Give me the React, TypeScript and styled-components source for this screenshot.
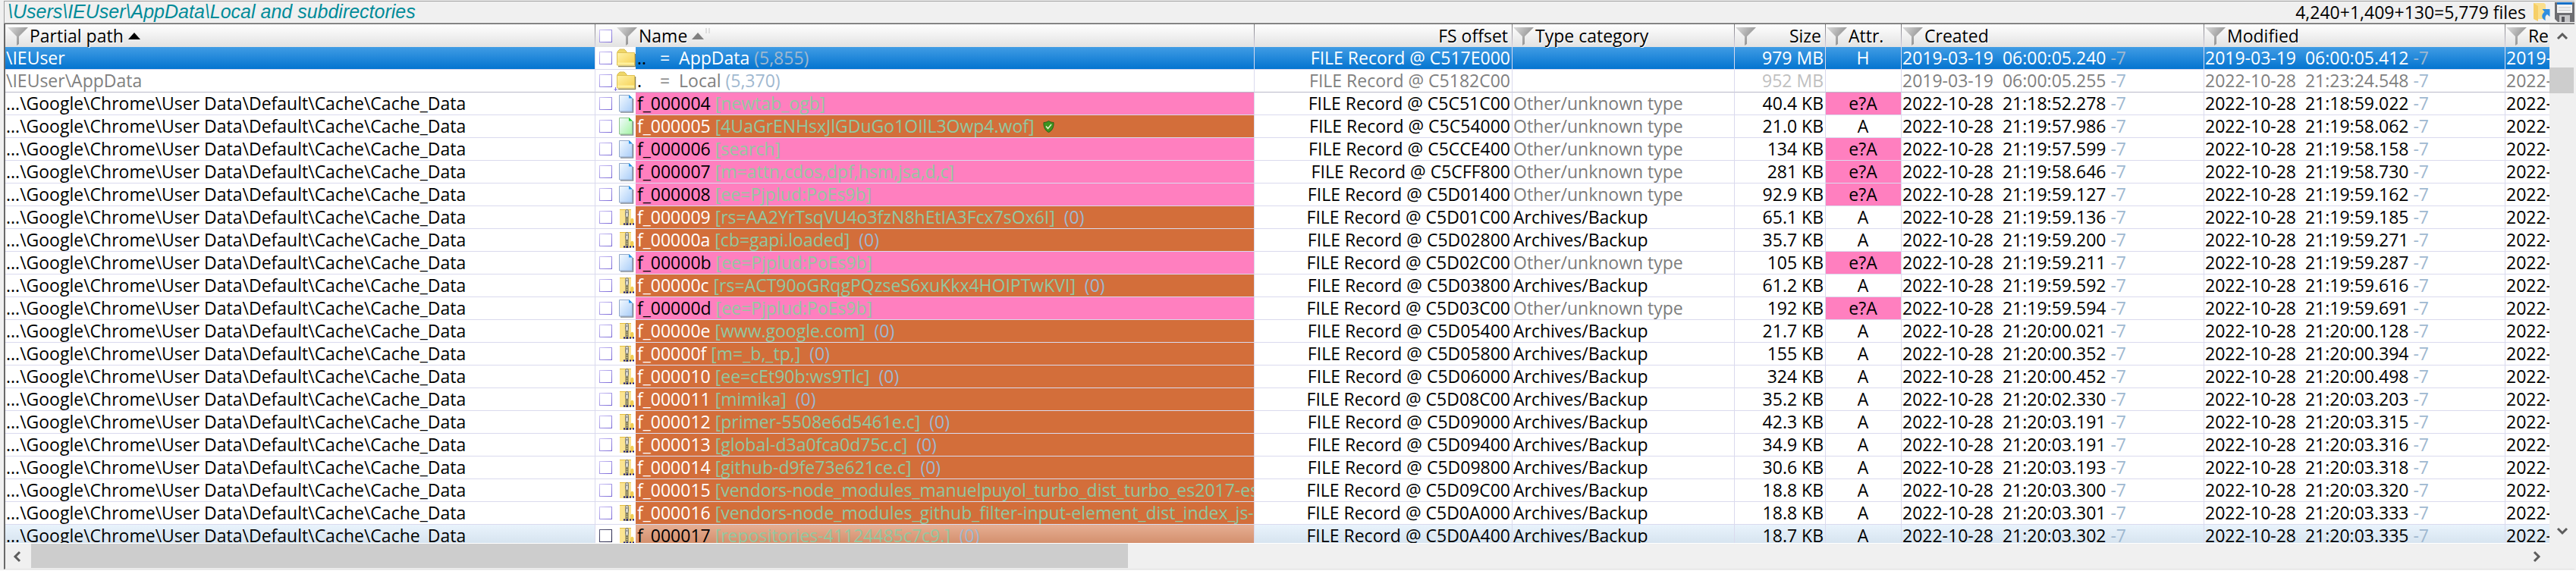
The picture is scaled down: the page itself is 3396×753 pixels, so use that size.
import React from "react";
import styled, { createGlobalStyle, css } from "styled-components";

type Kind = "file" | "compressed" | "archive" | "folder" | "folderHere";
type Tone = "selected" | "muted" | "hover" | "normal";

interface FileRow {
  path: string;
  kind: Kind;
  name: string;
  title?: string;
  target?: string;
  count?: string;
  verified?: boolean;
  offset: string;
  type: string;
  size: string;
  attr: string;
  created: string;
  modified: string;
  record: string;
  tone: Tone;
}

const CACHE = "...\\Google\\Chrome\\User Data\\Default\\Cache\\Cache_Data";
const OTHER = "Other/unknown type";
const ARCHIVE = "Archives/Backup";

const cacheFile = (
  kind: Kind,
  name: string,
  title: string,
  offset: string,
  size: string,
  created: string,
  modified: string,
  extra: Partial<FileRow> = {}
): FileRow => ({
  path: CACHE,
  kind,
  name,
  title,
  count: kind === "archive" ? "(0)" : undefined,
  offset,
  type: kind === "archive" ? ARCHIVE : OTHER,
  size,
  attr: kind === "file" ? "e?A" : "A",
  created: "2022-10-28  " + created,
  modified: "2022-10-28  " + modified,
  record: "2022-10-28",
  tone: "normal",
  ...extra,
});

const rows: FileRow[] = [
  {
    path: "\\IEUser", kind: "folder", name: "..", target: "AppData", count: "(5,855)",
    offset: "C517E000", type: "", size: "979 MB", attr: "H",
    created: "2019-03-19  06:00:05.240", modified: "2019-03-19  06:00:05.412",
    record: "2019-03-19", tone: "selected",
  },
  {
    path: "\\IEUser\\AppData", kind: "folderHere", name: ".", target: "Local", count: "(5,370)",
    offset: "C5182C00", type: "", size: "952 MB", attr: "",
    created: "2019-03-19  06:00:05.255", modified: "2022-10-28  21:23:24.548",
    record: "2022-10-28", tone: "muted",
  },
  cacheFile("file", "f_000004", "[newtab_ogb]", "C5C51C00", "40.4 KB", "21:18:52.278", "21:18:59.022"),
  cacheFile("compressed", "f_000005", "[4UaGrENHsxJlGDuGo1OIlL3Owp4.wof]", "C5C54000", "21.0 KB", "21:19:57.986", "21:19:58.062", { verified: true }),
  cacheFile("file", "f_000006", "[search]", "C5CCE400", "134 KB", "21:19:57.599", "21:19:58.158"),
  cacheFile("file", "f_000007", "[m=attn,cdos,dpf,hsm,jsa,d,c]", "C5CFF800", "281 KB", "21:19:58.646", "21:19:58.730"),
  cacheFile("file", "f_000008", "[ee=Pjplud:PoEs9b]", "C5D01400", "92.9 KB", "21:19:59.127", "21:19:59.162"),
  cacheFile("archive", "f_000009", "[rs=AA2YrTsqVU4o3fzN8hEtIA3Fcx7sOx6I]", "C5D01C00", "65.1 KB", "21:19:59.136", "21:19:59.185"),
  cacheFile("archive", "f_00000a", "[cb=gapi.loaded]", "C5D02800", "35.7 KB", "21:19:59.200", "21:19:59.271"),
  cacheFile("file", "f_00000b", "[ee=Pjplud:PoEs9b]", "C5D02C00", "105 KB", "21:19:59.211", "21:19:59.287"),
  cacheFile("archive", "f_00000c", "[rs=ACT90oGRqgPQzseS6xuKkx4HOIPTwKVI]", "C5D03800", "61.2 KB", "21:19:59.592", "21:19:59.616"),
  cacheFile("file", "f_00000d", "[ee=Pjplud:PoEs9b]", "C5D03C00", "192 KB", "21:19:59.594", "21:19:59.691"),
  cacheFile("archive", "f_00000e", "[www.google.com]", "C5D05400", "21.7 KB", "21:20:00.021", "21:20:00.128"),
  cacheFile("archive", "f_00000f", "[m=_b,_tp,]", "C5D05800", "155 KB", "21:20:00.352", "21:20:00.394"),
  cacheFile("archive", "f_000010", "[ee=cEt90b:ws9Tlc]", "C5D06000", "324 KB", "21:20:00.452", "21:20:00.498"),
  cacheFile("archive", "f_000011", "[mimika]", "C5D08C00", "35.2 KB", "21:20:02.330", "21:20:03.203"),
  cacheFile("archive", "f_000012", "[primer-5508e6d5461e.c]", "C5D09000", "42.3 KB", "21:20:03.191", "21:20:03.315"),
  cacheFile("archive", "f_000013", "[global-d3a0fca0d75c.c]", "C5D09400", "34.9 KB", "21:20:03.191", "21:20:03.316"),
  cacheFile("archive", "f_000014", "[github-d9fe73e621ce.c]", "C5D09800", "30.6 KB", "21:20:03.193", "21:20:03.318"),
  cacheFile("archive", "f_000015", "[vendors-node_modules_manuelpuyol_turbo_dist_turbo_es2017-es", "C5D09C00", "18.8 KB", "21:20:03.300", "21:20:03.320", { count: undefined }),
  cacheFile("archive", "f_000016", "[vendors-node_modules_github_filter-input-element_dist_index_js-", "C5D0A000", "18.8 KB", "21:20:03.301", "21:20:03.333", { count: undefined }),
  cacheFile("archive", "f_000017", "[repositories-41124485c7c9.]", "C5D0A400", "18.7 KB", "21:20:03.302", "21:20:03.335", { tone: "hover" }),
];

const GlobalStyle = createGlobalStyle`
  * { box-sizing: border-box; }
  body {
    margin: 0;
    background: #f0f0f0;
    color: #000;
    font: 23px/29px "Open Sans", "Noto Sans", sans-serif;
  }
  button { padding: 0; border: 0; background: none; color: inherit; font: inherit; }
`;

const Browser = styled.div`
  display: flex;
  flex-direction: column;
  height: 100vh;
  padding: 1px 2px 1px 5px;
  border-bottom: 1px solid #fff;
`;

const TitleBar = styled.header`
  display: flex;
  align-items: center;
  justify-content: space-between;
  flex: none;
  height: 30px;
  border-top: 1px solid #a0a0a0;
  border-bottom: 1px solid #a0a0a0;
  border-left: 1px solid #a0a0a0;
  white-space: nowrap;
`;

const Location = styled.h1`
  margin: 0;
  padding: 0 0 2px 4px;
  color: #008b99;
  font: italic 25px/26px "Liberation Sans", Arial, sans-serif;
`;

const Summary = styled.div`
  display: flex;
  align-items: center;
  gap: 6px;
`;

const Total = styled.span`
  padding-right: 4px;
`;

const IconButton = styled.button`
  display: flex;
  align-items: center;
  flex: none;
`;

const Pane = styled.main`
  display: grid;
  grid-template: minmax(0, 1fr) 33px / minmax(0, 1fr) 33px;
  flex: 1;
  min-height: 0;
  border-top: 1px solid #696969;
  border-left: 2px solid #696969;
  border-bottom: 1px solid #e3e3e3;
`;

const Viewport = styled.div`
  overflow: hidden;
  background: #fff;
  border-bottom: 1px solid #fff;
`;

const Grid = styled.table`
  width: 100%;
  min-width: 2600px;
  table-layout: fixed;
  border-spacing: 0;
  white-space: pre;
`;

const Column = styled.col<{ $width?: number }>`
  width: ${(p) => (p.$width ? `${p.$width}px` : "auto")};
`;

const HeaderCell = styled.th`
  height: 30px;
  padding: 0 1px;
  overflow-x: clip;
  font-weight: 400;
  text-shadow: 1px 1px 0 #fff;
  background: linear-gradient(#fff, #e2e2e2);
  border-right: 1px solid;
  border-image: linear-gradient(#777, #d8d4ea) 1;
  &:last-child { border-right: 0; }
`;

const HeaderContent = styled.div<{ $align?: "end" | "spread"; $inset?: number }>`
  display: flex;
  align-items: center;
  justify-content: ${(p) =>
    p.$align === "end" ? "flex-end" : p.$align === "spread" ? "space-between" : "flex-start"};
  gap: 2px;
  padding-left: ${(p) => p.$inset ?? 0}px;
  padding-right: ${(p) => (p.$align ? 4 : 0)}px;
`;

const HeaderLabel = styled.span`
  line-height: 29px;
`;

const SortMark = styled.svg`
  flex: none;
  margin-left: 4px;
`;

const toneText = {
  selected: "#fff",
  muted: "#808080",
  hover: "#000",
  normal: "#000",
};

const selectedFill = "linear-gradient(#409ce4, #0474d0)";
const hoverFill = "linear-gradient(#e9f3fc, #d3e1ed)";

const Row = styled.tr<{ $tone: Tone }>`
  color: ${(p) => toneText[p.$tone]};
  & > td {
    border-bottom-color: ${(p) => (p.$tone === "muted" ? "#b8b8c8" : "#dadaee")};
  }
  & > td:last-child {
    border-right: 0;
    padding: 0 0 0 1px;
  }
`;

const Cell = styled.td<{
  $tone: Tone;
  $align?: "left" | "right" | "center";
  $dim?: string;
  $alert?: boolean;
}>`
  height: 30px;
  padding: 0 2px 0 1px;
  overflow-x: clip;
  text-align: ${(p) => p.$align ?? "left"};
  border-right: 1px solid #dadaee;
  border-bottom: 1px solid #dadaee;
  ${(p) => p.$tone === "selected" && css`background: ${selectedFill};`}
  ${(p) => p.$tone === "hover" && css`background: ${hoverFill};`}
  ${(p) => p.$alert && css`background: #ff7fbf;`}
  ${(p) => p.$dim && css`color: ${p.$dim};`}
`;

const NameCell = styled.td`
  height: 30px;
  padding: 0;
  border-right: 1px solid #dadaee;
  border-bottom: 1px solid #dadaee;
`;

const NameLayout = styled.div`
  display: flex;
  height: 29px;
`;

const Marker = styled.div`
  display: flex;
  align-items: center;
  flex: none;
  width: 53px;
  padding-left: 5px;
  gap: 6px;
`;

const CheckBox = styled.input<{ $dark?: boolean }>`
  appearance: none;
  flex: none;
  width: 17px;
  height: 17px;
  margin: 0;
  border: 1px solid transparent;
  background: linear-gradient(#fff, #fff) padding-box,
    ${(p) => (p.$dark ? "linear-gradient(135deg, #5a5a7c, #1c1c40)" : "linear-gradient(135deg, #cfc6f6, #7664d6)")}
      border-box;
`;

const nameFill: Record<Kind, string> = {
  file: "#ff7fbf",
  compressed: "#d36e3a",
  archive: "#d36e3a",
  folder: "none",
  folderHere: "none",
};

const nameText = (kind: Kind, tone: Tone) =>
  kind === "file" || tone === "hover" || kind === "folder" || kind === "folderHere" ? "#000" : "#fff";

const NameLabel = styled.div<{ $kind: Kind; $tone: Tone }>`
  display: flex;
  align-items: center;
  flex: 1;
  min-width: 0;
  padding-left: 2px;
  overflow-x: clip;
  color: ${(p) => nameText(p.$kind, p.$tone)};
  background: ${(p) =>
    p.$tone === "selected"
      ? selectedFill
      : p.$tone === "hover"
      ? "linear-gradient(#e6ae93, #d08a66)"
      : nameFill[p.$kind]};
`;

const LinkTarget = styled.span<{ $tone: Tone }>`
  color: ${(p) => toneText[p.$tone]};
`;

const PageTitle = styled.span`
  color: #92c8a0;
`;

const Faint = styled.span`
  color: #9fb8d0;
`;

const VerticalBar = styled.div`
  display: flex;
  flex-direction: column;
  justify-content: space-between;
  align-items: stretch;
  padding-right: 1px;
`;

const HorizontalBar = styled.div`
  display: flex;
  justify-content: space-between;
  padding-bottom: 1px;
`;

const ScrollArrow = styled.button`
  display: flex;
  align-items: center;
  justify-content: center;
  flex: none;
  width: 34px;
  height: 34px;
`;

const VerticalTrack = styled.div`
  flex: 1;
  padding-top: 23px;
`;

const VerticalThumb = styled.div`
  height: 34px;
  background: #cdcdcd;
`;

const HorizontalTrack = styled.div`
  flex: 1;
`;

const HorizontalThumb = styled.div`
  width: 44%;
  height: 100%;
  background: #cdcdcd;
`;

const Funnel = () => (
  <svg width="27" height="25" viewBox="0 0 27 25" aria-hidden="true">
    <defs>
      <linearGradient id="funnel" x1="0" y1="0" x2="1" y2="0.6">
        <stop offset="0" stopColor="#dcdcdc" />
        <stop offset="1" stopColor="#868686" />
      </linearGradient>
    </defs>
    <path d="M0 1H27L15 13V23L12 25V13Z" fill="url(#funnel)" />
  </svg>
);

const Triangle = ({ color }: { color: string }) => (
  <SortMark width="16" height="9" viewBox="0 0 16 9" aria-hidden="true">
    <path d="M8 0L16 9H0Z" fill={color} />
  </SortMark>
);

const SecondaryMark = () => (
  <svg width="6" height="20" viewBox="0 0 6 20" aria-hidden="true">
    <path d="M1 0V7M5 0V7" stroke="#c4c4c4" strokeWidth="1" />
  </svg>
);

const FolderIcon = ({ here }: { here?: boolean }) => (
  <svg width="25" height="25" viewBox="0 0 25 25" overflow="visible" aria-hidden="true">
    <defs>
      <linearGradient id="folder" x1="0" y1="0" x2="1" y2="1">
        <stop offset="0" stopColor="#fff3a8" />
        <stop offset="1" stopColor="#f5cf52" />
      </linearGradient>
    </defs>
    <path d="M1 4L4 1H10L13 4V8H1Z" fill="#efd768" stroke="#d8bc50" />
    <path d="M2 23.500H24.500V7" fill="none" stroke="#8f8658" strokeWidth="1.500" />
    <path d="M0.500 5.500H23.500V22H0.500Z" fill="url(#folder)" stroke="#dfc257" />
    <path d="M1 18.500H23V21.500H1Z" fill="#fff09c" />
    {here && <path d="M-1.500 21V26M-3.500 24H1" stroke="#7b6fe0" strokeWidth="1" />}
  </svg>
);

const PageIcon = ({ green }: { green?: boolean }) => (
  <svg width="25" height="25" viewBox="0 0 25 25" aria-hidden="true">
    <defs>
      <linearGradient id={green ? "pageGreen" : "pageBlue"} x1="0" y1="0" x2="1" y2="1">
        <stop offset="0" stopColor="#f4faff" />
        <stop offset="1" stopColor={green ? "#a4f4a4" : "#a9cdf8"} />
      </linearGradient>
    </defs>
    <path d="M5 24H21.500V6" fill="none" stroke="#808890" strokeWidth="1.500" />
    <path
      d="M3.500 1.500H16.500L20.500 5.500V23H3.500Z"
      fill={green ? "url(#pageGreen)" : "url(#pageBlue)"}
      stroke={green ? "#8fc48f" : "#93a9c9"}
    />
    <path d="M16 1L21 5.500H16Z" fill={green ? "#22c832" : "#2894e8"} />
  </svg>
);

const ZipIcon = () => (
  <svg width="25" height="25" viewBox="0 0 25 25" aria-hidden="true">
    <path d="M4 2H19V23H4Z" fill="#fbe491" />
    <path d="M4 2.500H19" stroke="#e4bd3e" />
    <path d="M18 23V16C19 13 22 13 22.500 16V21Z" fill="#f0cd54" />
    <path d="M13.500 12V23" stroke="#777355" strokeWidth="4" />
    <path d="M13.500 12V22" stroke="#e8dfb0" strokeWidth="2" strokeDasharray="1 1.500" />
    <rect x="11.500" y="2.500" width="4" height="10" rx="2" fill="#d5d5d0" stroke="#77776c" />
    <path d="M13.500 5V7" stroke="#555" />
    <path d="M9 21.500H24" stroke="#10107c" strokeWidth="2" strokeDasharray="2 2" />
  </svg>
);

const Shield = () => (
  <svg width="15" height="16" viewBox="0 0 15 16" aria-hidden="true">
    <path
      d="M7.500 0.500C9.500 2 12 2.500 14 2.500C14.500 8 12.500 13 7.500 15.500C2.500 13 0.500 8 1 2.500C3 2.500 5.500 2 7.500 0.500Z"
      fill="#3c9420"
      stroke="#2b5f1c"
    />
    <path d="M4 7.500L6.500 10.500L11 5" fill="none" stroke="#e4f2c8" strokeWidth="1.500" />
  </svg>
);

const ShortcutFolder = () => (
  <svg width="22" height="26" viewBox="0 0 22 26" aria-hidden="true">
    <path d="M0 1H14L16 3V22H0Z" fill="#fbdf8c" />
    <path d="M0 1L6 5V25L0 22Z" fill="#f6cf68" />
    <path d="M21.500 9V19L18 16C15 18 15 21 16 24C10 22 10 16 14.500 12.500L11.500 9Z" fill="#2f8ee0" />
  </svg>
);

const Floppy = () => (
  <svg width="26" height="26" viewBox="0 0 26 26" aria-hidden="true">
    <path d="M0 0H26V26H4L0 22Z" fill="#6e6e72" />
    <path d="M3 0H23V14H3Z" fill="#f2f2f2" />
    <path d="M3 0H23V3H3Z" fill="#1670c8" />
    <path d="M5 7H21M5 10.500H21" stroke="#c8c8c8" />
    <path d="M6 17H20V26H6Z" fill="#c6c6c8" />
    <path d="M9 19H13V26H9Z" fill="#55555a" />
  </svg>
);

const arrowPaths = {
  up: "M2 10L8 4L14 10",
  down: "M2 5L8 11L14 5",
  left: "M10 2L4 8L10 14",
  right: "M5 2L11 8L5 14",
};

const Arrow = ({ to }: { to: keyof typeof arrowPaths }) => (
  <svg width="16" height="16" viewBox="0 0 16 16" aria-hidden="true">
    <path d={arrowPaths[to]} fill="none" stroke="#5c5c5c" strokeWidth="3" />
  </svg>
);

const kindIcon: Record<Kind, React.ReactNode> = {
  file: <PageIcon />,
  compressed: <PageIcon green />,
  archive: <ZipIcon />,
  folder: <FolderIcon />,
  folderHere: <FolderIcon here />,
};

const FileEntry = ({ row }: { row: FileRow }) => {
  const { tone } = row;
  return (
    <Row $tone={tone}>
      <Cell $tone={tone}>{row.path}</Cell>
      <NameCell>
        <NameLayout>
          <Marker>
            <CheckBox type="checkbox" aria-label={`Tag ${row.name}`} $dark={tone === "hover"} />
            {kindIcon[row.kind]}
          </Marker>
          <NameLabel $kind={row.kind} $tone={tone}>
            <span>{row.name}</span>
            {row.target && (
              <LinkTarget $tone={tone}>{(row.name === "." ? "   " : "  ") + " =  " + row.target + " "}</LinkTarget>
            )}
            {row.title && <PageTitle>{" " + row.title + "  "}</PageTitle>}
            {row.count && <Faint>{row.count}</Faint>}
            {row.verified && <Shield />}
          </NameLabel>
        </NameLayout>
      </NameCell>
      <Cell $tone={tone} $align="right">{"FILE Record @ " + row.offset}</Cell>
      <Cell $tone={tone} $dim={row.type === OTHER ? "#7c7c7c" : undefined}>{row.type}</Cell>
      <Cell $tone={tone} $align="right" $dim={tone === "muted" ? "#c0c0c0" : undefined}>{row.size}</Cell>
      <Cell $tone={tone} $align="center" $alert={row.kind === "file"}>{row.attr}</Cell>
      <Cell $tone={tone}>
        {row.created} <Faint>-7</Faint>
      </Cell>
      <Cell $tone={tone}>
        {row.modified} <Faint>-7</Faint>
      </Cell>
      <Cell $tone={tone}>{row.record}</Cell>
    </Row>
  );
};

export default function App() {
  return (
    <>
      <GlobalStyle />
      <Browser>
        <TitleBar>
          <Location>\Users\IEUser\AppData\Local and subdirectories</Location>
          <Summary>
            <Total>4,240+1,409+130=5,779 files</Total>
            <IconButton aria-label="Open folder"><ShortcutFolder /></IconButton>
            <IconButton aria-label="Save"><Floppy /></IconButton>
          </Summary>
        </TitleBar>
        <Pane>
          <Viewport>
            <Grid>
              <colgroup>
                <Column $width={778} />
                <Column />
                <Column $width={340} />
                <Column $width={293} />
                <Column $width={120} />
                <Column $width={100} />
                <Column $width={399} />
                <Column $width={397} />
                <Column $width={58} />
              </colgroup>
              <thead>
                <tr>
                  <HeaderCell>
                    <HeaderContent $inset={2}>
                      <Funnel />
                      <HeaderLabel>Partial path</HeaderLabel>
                      <Triangle color="#000" />
                    </HeaderContent>
                  </HeaderCell>
                  <HeaderCell>
                    <HeaderContent $inset={4}>
                      <CheckBox type="checkbox" aria-label="Tag all" />
                      <HeaderContent $inset={4}>
                        <Funnel />
                        <HeaderLabel>Name</HeaderLabel>
                        <Triangle color="#808080" />
                        <SecondaryMark />
                      </HeaderContent>
                    </HeaderContent>
                  </HeaderCell>
                  <HeaderCell>
                    <HeaderContent $align="end">
                      <HeaderLabel>FS offset</HeaderLabel>
                    </HeaderContent>
                  </HeaderCell>
                  <HeaderCell>
                    <HeaderContent><Funnel /><HeaderLabel>Type category</HeaderLabel></HeaderContent>
                  </HeaderCell>
                  <HeaderCell>
                    <HeaderContent $align="spread"><Funnel /><HeaderLabel>Size</HeaderLabel></HeaderContent>
                  </HeaderCell>
                  <HeaderCell>
                    <HeaderContent><Funnel /><HeaderLabel>Attr.</HeaderLabel></HeaderContent>
                  </HeaderCell>
                  <HeaderCell>
                    <HeaderContent><Funnel /><HeaderLabel>Created</HeaderLabel></HeaderContent>
                  </HeaderCell>
                  <HeaderCell>
                    <HeaderContent><Funnel /><HeaderLabel>Modified</HeaderLabel></HeaderContent>
                  </HeaderCell>
                  <HeaderCell>
                    <HeaderContent><Funnel /><HeaderLabel>Re</HeaderLabel></HeaderContent>
                  </HeaderCell>
                </tr>
              </thead>
              <tbody>
                {rows.map((row) => (
                  <FileEntry key={row.offset} row={row} />
                ))}
              </tbody>
            </Grid>
          </Viewport>
          <VerticalBar>
            <ScrollArrow aria-label="Scroll up"><Arrow to="up" /></ScrollArrow>
            <VerticalTrack><VerticalThumb /></VerticalTrack>
            <ScrollArrow aria-label="Scroll down"><Arrow to="down" /></ScrollArrow>
          </VerticalBar>
          <HorizontalBar>
            <ScrollArrow aria-label="Scroll left"><Arrow to="left" /></ScrollArrow>
            <HorizontalTrack><HorizontalThumb /></HorizontalTrack>
            <ScrollArrow aria-label="Scroll right"><Arrow to="right" /></ScrollArrow>
          </HorizontalBar>
        </Pane>
      </Browser>
    </>
  );
}
